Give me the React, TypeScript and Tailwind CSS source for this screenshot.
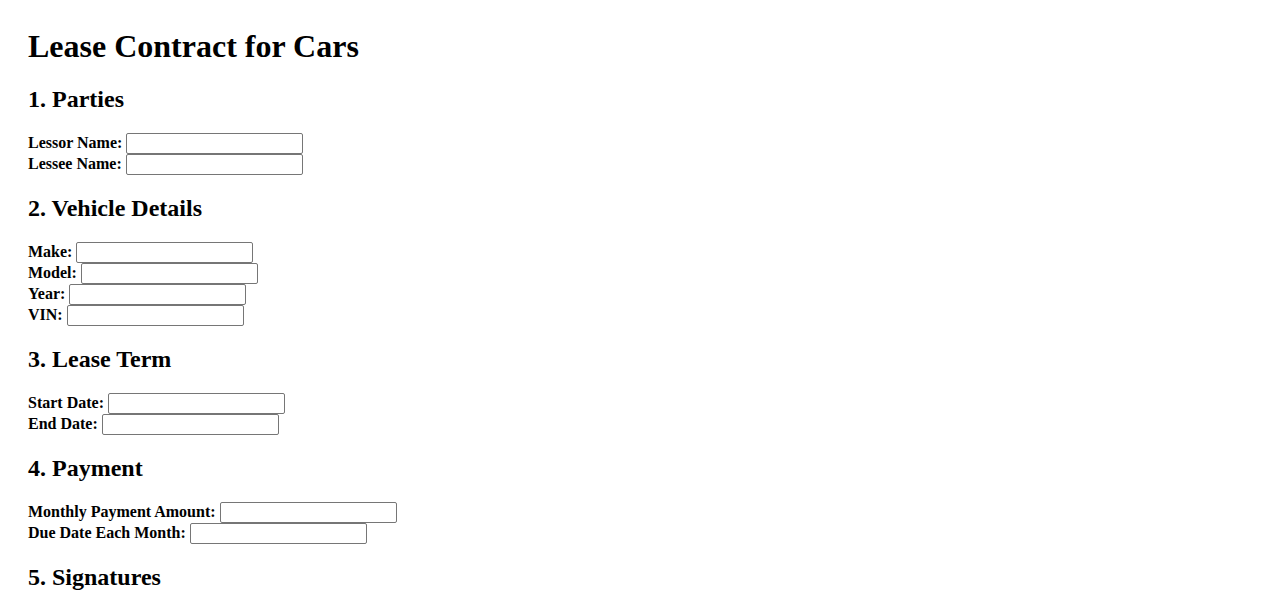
const sections = [
  { title: '1. Parties', fields: ['Lessor Name:', 'Lessee Name:'] },
  { title: '2. Vehicle Details', fields: ['Make:', 'Model:', 'Year:', 'VIN:'] },
  { title: '3. Lease Term', fields: ['Start Date:', 'End Date:'] },
  { title: '4. Payment', fields: ['Monthly Payment Amount:', 'Due Date Each Month:'] },
  { title: '5. Signatures', fields: [] as string[] },
]

function Field({ label }: { label: string }) {
  return (
    <div className="flex h-[21px] items-center gap-[4px]">
      <label className="text-[16px] font-bold leading-[18px]">{label}</label>
      <input
        type="text"
        className="h-[21px] w-[177px] rounded-[2px] border border-[#767676] bg-white px-[2px] text-[13px] outline-none"
      />
    </div>
  )
}

export default function App() {
  return (
    <div className="min-h-screen bg-white px-[28px] pt-[28px] pb-[8px] font-['Liberation_Serif',serif] text-black">
      <h1 className="mb-[20.7px] text-[32px] font-bold leading-[37px]">Lease Contract for Cars</h1>
      {sections.map((s) => (
        <div key={s.title}>
          <h2 className="my-[19.7px] text-[24px] font-bold leading-[27.6px]">{s.title}</h2>
          {s.fields.length > 0 && (
            <form>
              {s.fields.map((f) => (
                <Field key={f} label={f} />
              ))}
            </form>
          )}
        </div>
      ))}
    </div>
  )
}
